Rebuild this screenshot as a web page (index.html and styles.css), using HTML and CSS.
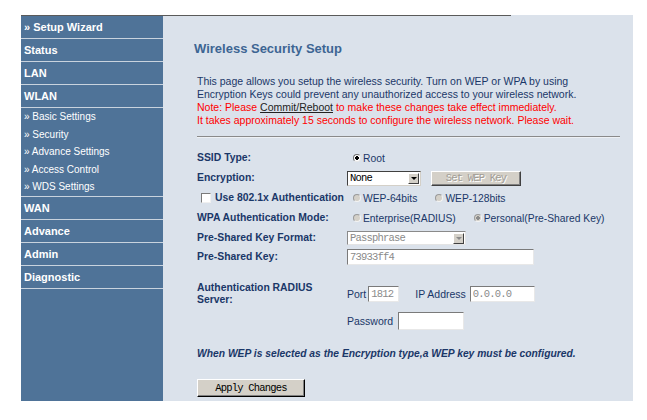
FILE: index.html
```html
<!DOCTYPE html>
<html lang="en">
<head>
    <meta charset="UTF-8">
    <meta name="viewport" content="width=device-width, initial-scale=1.0">
    <title>Wireless Security Setup</title>
    <link rel="stylesheet" href="styles.css">
</head>
<body>

    <div class="frame">
        <div class="menu">
            <div class="menu-item">&raquo; Setup Wizard</div>
            <div class="menu-item">Status</div>
            <div class="menu-item">LAN</div>
            <div class="menu-item">WLAN</div>
            <div class="submenu">
                <div class="sub-item">&raquo; Basic Settings</div>
                <div class="sub-item">&raquo; Security</div>
                <div class="sub-item">&raquo; Advance Settings</div>
                <div class="sub-item">&raquo; Access Control</div>
                <div class="sub-item">&raquo; WDS Settings</div>
            </div>
            <div class="menu-item">WAN</div>
            <div class="menu-item">Advance</div>
            <div class="menu-item">Admin</div>
            <div class="menu-item">Diagnostic</div>
        </div>

        <div class="content">
            <h2 class="title">Wireless Security Setup</h2>
            <div class="page">
                <p class="intro">
                    This page allows you setup the wireless security. Turn on WEP or WPA by using<br>
                    Encryption Keys could prevent any unauthorized access to your wireless network.<br>
                    <span class="warn">Note: Please <a href="#">Commit/Reboot</a> to make these changes take effect immediately.<br>
                    It takes approximately 15 seconds to configure the wireless network. Please wait.</span>
                </p>
                <hr>

                <div class="form">
                    <div class="row">
                        <div class="label">SSID Type:</div>
                        <div class="value">
                            <label class="opt"><input type="radio" name="ssid" checked>Root</label>
                        </div>
                    </div>
                    <div class="row">
                        <div class="label">Encryption:</div>
                        <div class="value">
                            <span class="select enc"><span class="select-text">None</span><span class="arrow"></span></span>
                            <button class="btn wep" disabled>Set WEP Key</button>
                        </div>
                    </div>
                    <div class="row">
                        <div class="label"><input type="checkbox" class="check">Use 802.1x Authentication</div>
                        <div class="value">
                            <label class="opt"><input type="radio" name="wep" disabled>WEP-64bits</label>
                            <label class="opt opt-next"><input type="radio" name="wep" disabled>WEP-128bits</label>
                        </div>
                    </div>
                    <div class="row">
                        <div class="label">WPA Authentication Mode:</div>
                        <div class="value">
                            <label class="opt"><input type="radio" name="mode" disabled>Enterprise(RADIUS)</label>
                            <label class="opt opt-next"><input type="radio" name="mode" checked disabled>Personal(Pre-Shared Key)</label>
                        </div>
                    </div>
                    <div class="row">
                        <div class="label">Pre-Shared Key Format:</div>
                        <div class="value">
                            <span class="select format disabled"><span class="select-text">Passphrase</span><span class="arrow"></span></span>
                        </div>
                    </div>
                    <div class="row row-short">
                        <div class="label">Pre-Shared Key:</div>
                        <div class="value">
                            <input type="text" class="field psk" value="73933ff4" disabled>
                        </div>
                    </div>
                    <div class="row row-radius">
                        <div class="label">Authentication RADIUS<br>Server:</div>
                        <div class="value">
                            <span class="text">Port</span>
                            <input type="text" class="field port" value="1812" disabled>
                            <span class="text ip-label">IP Address</span>
                            <input type="text" class="field ip" value="0.0.0.0" disabled>
                        </div>
                    </div>
                    <div class="row row-pass">
                        <div class="label"></div>
                        <div class="value">
                            <span class="text">Password</span>
                            <input type="password" class="field pass">
                        </div>
                    </div>
                </div>

                <p class="note">When WEP is selected as the Encryption type,a WEP key must be configured.</p>

                <button class="btn apply">Apply Changes</button>
            </div>
        </div>
    </div>

</body>
</html>
```

FILE: styles.css
```css
* {
    box-sizing: border-box;
}

body {
    margin: 0;
    background-color: #ffffff;
    font-family: "Liberation Sans", Arial, sans-serif;
}

.frame {
    display: flex;
    width: 612px;
    height: 386px;
    margin: 15px 0 0 21px;
}

/* left menu */
.menu {
    width: 142px;
    background-color: #4f7398;
    border-top: 1px solid #5a5a5a;
    color: #ffffff;
}

.menu-item {
    height: 23px;
    line-height: 22px;
    padding-left: 3px;
    border-bottom: 1px solid #c9d3de;
    font-size: 11px;
    font-weight: bold;
}

.submenu {
    border-bottom: 1px solid #c9d3de;
}

.sub-item {
    height: 17.6px;
    line-height: 17.6px;
    padding-left: 3px;
    font-size: 10px;
}

/* main area */
.content {
    flex: 1;
    background: linear-gradient(#5a5a5a, #5a5a5a) no-repeat 0 0 / 348px 1px, #dbe2eb;
}

.title {
    margin: 26px 0 0 31px;
    font-size: 13px;
    line-height: 16px;
    color: #3d6593;
}

.page {
    width: 423px;
    margin-left: 34px;
    color: #1a3768;
}

.intro {
    margin: 18px 0 0;
    font-size: 10.5px;
    line-height: 13px;
}

.warn {
    color: #ff0000;
}

.warn a {
    color: #222222;
}

hr {
    height: 0;
    margin: 9px 0 0;
    border: none;
    border-top: 1px solid #8a8a8a;
    border-bottom: 1px solid #eef1f5;
}

.form {
    margin-top: 10px;
}

.row {
    display: flex;
    align-items: center;
    height: 20px;
    white-space: nowrap;
}

.row-short {
    height: 18px;
}

.row-radius {
    height: 26px;
    margin-top: 15px;
}

.row-pass {
    margin-top: 4px;
}

.label {
    display: flex;
    align-items: center;
    flex-shrink: 0;
    width: 150px;
    font-size: 10.4px;
    line-height: 12px;
    font-weight: bold;
}

.value {
    display: flex;
    align-items: center;
    font-size: 10.3px;
}

.opt {
    display: flex;
    align-items: center;
}

.opt-next {
    margin-left: 12px;
}

/* classic radio buttons */
.opt input {
    appearance: none;
    width: 8px;
    height: 8px;
    margin: 0 2px 0 6px;
    border-radius: 50%;
    border: 1px solid;
    border-color: #6f6f6f #e8e8e8 #e8e8e8 #6f6f6f;
    background-color: #ffffff;
}

.opt input:checked {
    background: radial-gradient(circle, #000000 1.6px, #ffffff 2px);
}

.opt input:disabled {
    background-color: #d4d0c8;
    border-color: #9a9a9a #f4f4f4 #f4f4f4 #9a9a9a;
}

.opt input:checked:disabled {
    background: radial-gradient(circle, #8c8c8c 1.6px, #d4d0c8 2px);
}

.check {
    appearance: none;
    flex-shrink: 0;
    width: 10px;
    height: 10px;
    margin: 0 4px 0 4px;
    border: 1px solid;
    border-color: #7a7a7a #f0f0f0 #f0f0f0 #7a7a7a;
    background-color: #ffffff;
}

/* fake select boxes */
.select {
    display: flex;
    align-items: center;
    height: 15px;
    border: 1px solid;
    border-color: #404040 #d4d0c8 #d4d0c8 #404040;
    background-color: #ffffff;
    font-family: "Liberation Mono", "Courier New", monospace;
    font-size: 10.5px;
    letter-spacing: -0.8px;
    color: #000000;
}

.select-text {
    flex: 1;
    padding-left: 2px;
}

.arrow {
    position: relative;
    width: 11px;
    height: 11px;
    margin-right: 1px;
    background-color: #d4d0c8;
    border: 1px solid;
    border-color: #ffffff #404040 #404040 #ffffff;
}

.arrow::after {
    content: "";
    position: absolute;
    left: 2px;
    top: 3px;
    border-left: 3px solid transparent;
    border-right: 3px solid transparent;
    border-top: 3px solid #000000;
}

.enc {
    width: 74px;
}

.format {
    width: 119px;
    height: 14px;
}

.select.disabled {
    color: #8a8a8a;
    border-color: #8a8a8a #e4e4e4 #e4e4e4 #8a8a8a;
}

.select.disabled .arrow::after {
    border-top-color: #8a8a8a;
}

/* buttons */
.btn {
    background-color: #d4d0c8;
    font-family: "Liberation Mono", "Courier New", monospace;
    font-size: 10.5px;
    letter-spacing: -0.8px;
    color: #000000;
    padding: 0;
    border: 1px solid;
    border-color: #ffffff #404040 #404040 #ffffff;
    box-shadow: inset -1px -1px #808080;
}

.wep {
    width: 90px;
    height: 15px;
    margin-left: 10px;
    color: #a09c94;
    text-shadow: 1px 1px #ffffff;
}

.apply {
    width: 108px;
    height: 18px;
    margin-top: 18px;
    border-color: #ffffff #000000 #000000 #ffffff;
}

/* text fields */
.field {
    height: 16px;
    padding: 0 2px;
    border: 1px solid;
    border-color: #7a7a7a #e8e8e8 #e8e8e8 #7a7a7a;
    background-color: #ffffff;
    font-family: "Liberation Mono", "Courier New", monospace;
    font-size: 10.5px;
    letter-spacing: -0.8px;
    color: #000000;
}

.field:disabled {
    color: #8a8a8a;
    background-color: #ffffff;
}

.psk {
    width: 187px;
}

.port {
    width: 31px;
    margin-left: 2px;
}

.ip-label {
    margin-left: 16px;
}

.ip {
    width: 65px;
    margin-left: 4px;
}

.pass {
    width: 66px;
    height: 18px;
    margin-left: 5px;
}

.text {
    font-size: 10.5px;
}

.note {
    margin: 16px 0 0;
    font-size: 10.3px;
    line-height: 14px;
    font-weight: bold;
    font-style: italic;
}
```
